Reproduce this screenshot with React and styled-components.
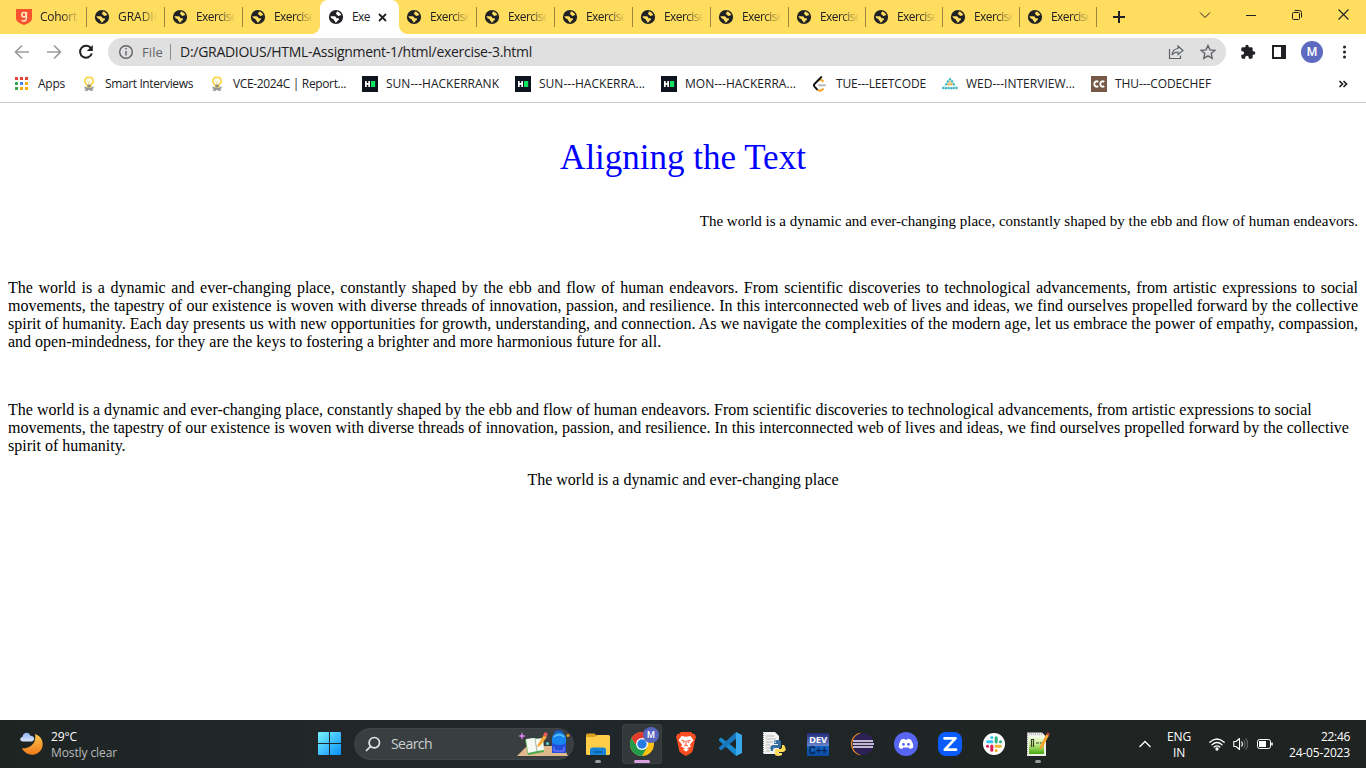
import React, { useLayoutEffect, useRef, useState } from "react";
import styled, { createGlobalStyle, css } from "styled-components";

const GlobalStyle = createGlobalStyle`
  * { box-sizing: border-box; }
  html, body { margin: 0; padding: 0; overflow: hidden; background: #fff; }
  svg { display: block; flex: none; }
`;

const ui = `"Open Sans", "Noto Sans", sans-serif`;

/* Text */
const Label = styled.span`
  display: block;
  flex: none;
  width: ${(p) => p.$width}px;
  font-family: ${ui};
  font-size: ${(p) => p.$size || 12}px;
  line-height: 16px;
  color: ${(p) => p.$color || "#202124"};
  white-space: nowrap;
`;

/* Tracks its text so that it fills the given width exactly. */
function Fit({ width, size, color, children }) {
  const ref = useRef(null);
  const [spacing, setSpacing] = useState(0);
  useLayoutEffect(() => {
    const natural = ref.current.getBoundingClientRect().width;
    setSpacing((width - natural) / children.length);
  }, [width, children]);
  return (
    <Label $width={width} $size={size} $color={color}>
      <span ref={ref} style={{ letterSpacing: spacing }}>{children}</span>
    </Label>
  );
}

/* Frame */
const Screen = styled.div`
  width: 1366px;
  height: 768px;
  display: flex;
  flex-direction: column;
  background: #fff;
  overflow: hidden;
`;

const TabStrip = styled.div`
  height: 34px;
  flex: none;
  display: flex;
  align-items: stretch;
  padding-left: 8px;
  background: #ffdd5e;
`;

const Tab = styled.div`
  position: relative;
  display: flex;
  flex: none;
  align-items: center;
  gap: 8px;
  width: ${(p) => p.$width}px;
  padding-left: 8px;
  ${(p) => p.$line && css`
    &::after {
      content: "";
      position: absolute;
      right: -1px;
      top: 7px;
      width: 1px;
      height: 20px;
      background: #9b8742;
    }
  `}
  ${(p) => p.$active && css`
    width: 79px;
    margin-right: -1px;
    background: #fff;
    border-radius: 8px 8px 0 0;
    &::before, &::after {
      content: "";
      position: absolute;
      bottom: 0;
      width: 8px;
      height: 8px;
    }
    &::before {
      left: -8px;
      background: radial-gradient(circle at 0 0, transparent 7.5px, #fff 8px);
    }
    &::after {
      right: -8px;
      background: radial-gradient(circle at 100% 0, transparent 7.5px, #fff 8px);
    }
  `}
`;

const TabTitle = styled.div`
  flex: none;
  ${(p) => p.$fade && css`mask-image: linear-gradient(90deg, #000 22px, transparent 39px);`}
`;

const NewTab = styled.div`
  display: flex;
  align-items: center;
  padding-left: 17px;
`;

const WindowButtons = styled.div`
  margin-left: auto;
  display: flex;
  height: 29px;
  align-items: center;
`;

const WindowButton = styled.div`
  width: 46px;
  display: flex;
  justify-content: center;
`;

const Toolbar = styled.div`
  height: 36px;
  flex: none;
  display: flex;
  align-items: center;
  padding-left: 14px;
`;

const NavButtons = styled.div`
  width: 94px;
  flex: none;
  display: flex;
  gap: 16px;
`;

const AddressBar = styled.div`
  width: 1118px;
  height: 28px;
  flex: none;
  border-radius: 14px;
  background: #e0e0e0;
  display: flex;
  align-items: center;
  padding: 0 10px;
`;

const AddressScheme = styled.div`
  padding-left: 8px;
`;

const AddressDivider = styled.i`
  width: 1px;
  height: 16px;
  margin: 0 9px 0 7px;
  background: #8b8c8e;
`;

const AddressActions = styled.div`
  margin-left: auto;
  display: flex;
  gap: 16px;
`;

const ToolbarActions = styled.div`
  display: flex;
  align-items: center;
  gap: 14px;
  padding-left: 14px;
`;

const Avatar = styled.div`
  width: 22px;
  height: 22px;
  border-radius: 50%;
  background: #5c6bc0;
  color: #fff;
  font: 500 12px/22px Roboto, sans-serif;
  text-align: center;
`;

const BookmarkBar = styled.div`
  height: 33px;
  flex: none;
  display: flex;
  align-items: center;
  gap: 16px;
  padding: 0 18px 4px 14px;
  border-bottom: 1px solid #c8c8c8;
`;

const Bookmark = styled.div`
  display: flex;
  align-items: center;
  gap: 8px;
`;

const Overflow = styled.div`
  margin-left: auto;
`;

/* Document */
const Page = styled.main`
  flex: 1;
  min-height: 0;
  padding: 35px 8px 0;
  font-family: "Liberation Serif", "Times New Roman", serif;
  font-size: 16px;
  line-height: 18px;
  color: #000;
`;

const Heading = styled.h1`
  margin: 0;
  font-size: 35px;
  line-height: 40px;
  font-weight: 400;
  text-align: center;
  color: #00f;
`;

const Paragraph = styled.p`
  margin: ${(p) => p.$top}px 0 0;
  text-align: ${(p) => p.$align || "left"};
  font-size: ${(p) => p.$size || 16}px;
`;

/* Taskbar */
const Taskbar = styled.footer`
  height: 48px;
  flex: none;
  display: flex;
  align-items: center;
  background: linear-gradient(90deg, #1e2422, #22282a 28%, #20272a 45%, #1f2523 75%, #1f2322);
`;

const Weather = styled.div`
  width: 318px;
  display: flex;
  gap: 7px;
  padding-left: 19px;
  align-items: center;
`;

const SearchBox = styled.div`
  width: 220px;
  height: 32px;
  margin-left: 12px;
  border-radius: 16px;
  border: 1px solid #404648;
  background: #393f40;
  display: flex;
  align-items: center;
  gap: 10px;
  padding-left: 10px;
`;

const SearchArt = styled.div`
  margin-left: auto;
  padding-right: 1px;
`;

const Apps = styled.div`
  display: flex;
  gap: 4px;
  margin-left: 4px;
`;

const AppTile = styled.div`
  position: relative;
  width: 40px;
  height: 40px;
  border-radius: 4px;
  display: flex;
  align-items: center;
  justify-content: center;
  ${(p) => p.$active && css`background: #33393b; box-shadow: inset 0 0 0 1px #3b4143;`}
`;

const Indicator = styled.i`
  position: absolute;
  left: 50%;
  bottom: 1px;
  width: ${(p) => (p.$active ? 16 : 6)}px;
  height: 3px;
  transform: translateX(-50%);
  border-radius: 2px;
  background: ${(p) => (p.$active ? "#d9a0df" : "#979b9b")};
`;

const ProfileBadge = styled.div`
  position: absolute;
  left: 21px;
  top: 3px;
  width: 16px;
  height: 16px;
  border-radius: 50%;
  background: #5865bd;
  color: #fff;
  font: 500 9px/16px Roboto, sans-serif;
  text-align: center;
`;

const Tray = styled.div`
  margin-left: auto;
  display: flex;
  align-items: center;
  padding-right: 16px;
`;

const TextStack = styled.div`
  display: flex;
  flex-direction: column;
  align-items: ${(p) => p.$align || "center"};
  margin: ${(p) => p.$margin || 0};
  padding-top: ${(p) => p.$drop || 0}px;
`;

const TrayIcons = styled.div`
  display: flex;
  gap: 8px;
`;

/* Icons */
const GlobeTint = styled.span`color: ${(p) => (p.$active ? "#fff" : "#ffdd5e")};`;

const Globe = () => (
  <svg width="16" height="16" viewBox="0 0 16 16">
    <circle cx="8" cy="8" r="7.1" fill="#202124" />
    <path d="M8.700 2.400c2.200.2 4 1.600 4.600 3.600-.8.3-1.400.1-2 .7-.7.600-1.700.2-1.900-.6-.3-.7-1.200-.5-1.400-1.300-.1-.9.800-.9.700-2.400zM2.400 7.300h3.700c1.600 0 2.300.8 2.200 1.900h1.800c1 .1 1.200 1 .6 1.700-.9.2-1.100.6-1.300 1.300-.5.8-1.300 1.300-2.300 1.300v-1.400c-1-.3-1.400-1-1.400-1.900-1.500-.2-3-1.300-3.300-2.900z" fill="currentColor" />
  </svg>
);

const Gradious = () => (
  <svg width="16" height="16" viewBox="0 0 16 16">
    <path d="M0 0h16v9.500c0 3-3.500 4.800-8 6.500-4.500-1.700-8-3.500-8-6.500z" fill="#f9522e" />
    <circle cx="8" cy="5.800" r="2.200" fill="none" stroke="#ffe9c8" strokeWidth="1.500" />
    <path d="M10.400 3v6.600c0 2.800-3.700 3-4.900 1.500" fill="none" stroke="#ffe9c8" strokeWidth="1.500" />
  </svg>
);

const AppsGrid = () => (
  <svg width="16" height="16" viewBox="0 0 16 16">
    {["#ea4335", "#ea4335", "#ea4335", "#34a853", "#4285f4", "#f9ab00", "#34a853", "#f9ab00", "#f9ab00"].map((c, i) => (
      <rect key={i} x={1 + (i % 3) * 5} y={1 + Math.floor(i / 3) * 5} width="3" height="3" fill={c} />
    ))}
  </svg>
);

const Bulb = () => (
  <svg width="16" height="16" viewBox="0 0 16 16">
    <path d="M8 1.300c-5 0-5.200 5.200-2.300 7.200L6.500 11h3l.8-2.500C13.200 6.500 13 1.300 8 1.300z" fill="#fffdf0" stroke="#f7d43c" strokeWidth="1.500" />
    <path d="M6.800 5.500L8 7.500l1.200-2" stroke="#e6cf79" strokeWidth=".8" fill="none" />
    <path d="M6.400 8.500h3.200v2.500H6.400z" fill="#8d8a7c" />
    <path d="M3.500 10.300l2 1.200h5l2-1.200v2l-1.400 1 1.600 1.500H9L8 13.200l-1 1.600H3.300l1.600-1.500-1.400-1z" fill="#929297" />
  </svg>
);

const HackerRank = () => (
  <svg width="16" height="16" viewBox="0 0 16 16">
    <path d="M0 0h16v16H0z" fill="#0e141e" />
    <path d="M3 5h1.700v2h1.600V5H8v6H6.300V8.700H4.700V11H3z" fill="#fff" />
    <path d="M9 5h4.200v6H9z" fill="#0be25f" />
  </svg>
);

const LeetCode = () => (
  <svg width="16" height="16" viewBox="0 0 16 16" fill="none" strokeWidth="1.900">
    <path d="M5.800 5l1.600-1.100c1-.5 1.900-.2 2.500.4l1.500 1.400M5.500 13.600c1.200 1.500 3.200 1.600 4.300.4l1.600-1.500" stroke="#f5a31a" />
    <path d="M9.800.5L2.500 8c-.8.900-.7 1.800 0 2.600l3 3.200" stroke="#111" />
    <path d="M6.300 9.300h7.500" stroke="#b3b3b3" />
  </svg>
);

const InterviewBit = () => (
  <svg width="16" height="16" viewBox="0 0 16 16">
    <path d="M8 3L1 12M8 3l7 9M4 8.500h8M1 12h14" stroke="#8fd0d6" strokeWidth=".8" />
    {[[8, 3.2], [5.900, 5.500], [10.100, 5.500], [4.300, 8.200], [11.700, 8.200], [1.300, 12], [4, 12.300], [6.700, 12], [9.400, 12.300], [12, 12], [14.700, 12]].map(([x, y], i) => (
      <circle key={i} cx={x} cy={y} r="1.200" fill="#41b9c6" />
    ))}
    <circle cx="6.700" cy="8.300" r="1.200" fill="#f1b04b" />
    <circle cx="9.300" cy="8.300" r="1.200" fill="#f1b04b" />
    <circle cx="8" cy="5.800" r=".9" fill="#f1b04b" />
  </svg>
);

const CodeChef = () => (
  <svg width="16" height="16" viewBox="0 0 16 16">
    <path d="M0 0h16v16H0z" fill="#755846" />
    <path d="M7.300 5.900C5.200 4.600 3.300 5.700 3.300 8s1.900 3.400 4 2.100M13.300 5.900c-2.100-1.300-4-.2-4 2.100s1.900 3.400 4 2.100" fill="none" stroke="#fff" strokeWidth="1.900" />
  </svg>
);

const Stroke = ({ w = 16, h = 16, d, color = "#202124", sw = 1.5, children }) => (
  <svg width={w} height={h} viewBox={`0 0 ${w} ${h}`} fill="none" stroke={color} strokeWidth={sw}>
    <path d={d} />
    {children}
  </svg>
);

const Reload = () => (
  <Stroke sw={2} d="M13 4.200A6 6 0 1 0 13.800 9.500">
    <path d="M14.800 1v6H8.800z" fill="#202124" stroke="none" />
  </Stroke>
);

const Puzzle = () => (
  <svg width="16" height="16" viewBox="0 0 24 24" fill="#202124">
    <path d="M20.500 11H19V7c0-1.100-.9-2-2-2h-4V3.500a2.500 2.500 0 0 0-5 0V5H4c-1.100 0-2 .9-2 2v3.800h1.500a2.700 2.700 0 0 1 0 5.400H2V20c0 1.100.9 2 2 2h3.800v-1.500a2.700 2.700 0 0 1 5.400 0V22H17c1.100 0 2-.9 2-2v-4h1.500a2.500 2.500 0 0 0 0-5z" />
  </svg>
);

const PartlyMoon = () => (
  <svg width="25" height="24" viewBox="0 0 25 24">
    <defs>
      <linearGradient id="moon" x2="0" y2="1"><stop stopColor="#fbc54d" /><stop offset="1" stopColor="#f17b19" /></linearGradient>
      <linearGradient id="cloud" x2="0" y2="1"><stop stopColor="#8db5f5" /><stop offset="1" stopColor="#dce6fb" /></linearGradient>
    </defs>
    <path d="M16 2c9.500 3 10 15 2.500 19.300-5.500 3.200-12.500 1-15.500-5C10 16.900 18 12 16 2z" fill="url(#moon)" />
    <path d="M4 9.500C.5 9.500.2 5.500 3.600 4.800 4-.2 10.500-.3 11.200 3.700c5-.3 5.300 5.800 1 5.800z" fill="url(#cloud)" />
  </svg>
);

const WindowsLogo = () => (
  <svg width="24" height="24" viewBox="0 0 24 24">
    <defs><linearGradient id="win" x2="1" y2="1"><stop stopColor="#79f2ff" /><stop offset="1" stopColor="#0890fb" /></linearGradient></defs>
    <path d="M0 1q0-1 1-1h10v11H0zM12 0h10q1 0 1 1v10H12zM0 12h11v11H1q-1 0-1-1zM12 12h11v10q0 1-1 1H12z" fill="url(#win)" />
  </svg>
);

const SchoolArt = () => (
  <svg width="56" height="28" viewBox="0 0 56 28">
    <path d="M1 26L11 16h36l5 10z" fill="#dfb88b" />
    <path d="M6 2l1 3 3 1-3 1-1 3-1-3-3-1 3-1z" fill="#dd7df4" />
    <path d="M9 10l9-2 9 1 1 13-16 3z" fill="#4eaa52" />
    <path d="M10 9l8-1 2 1 7-1 1 12-7 1-9 2z" fill="#f7faf2" />
    <path d="M19 9l2 12" stroke="#a6b2a9" />
    <path d="M22 14l6-9 3 2-7 9-3 1z" fill="#f5ad38" />
    <path d="M27 5l2-3 3 2-2 3z" fill="#ed5b5b" />
    <circle cx="31.500" cy="13.500" r="1.500" fill="#55d9d0" />
    <path d="M39 3q0-2 3.500-2T46 3" stroke="#1a56b6" strokeWidth="2" fill="none" />
    <path d="M36 9c0-9 14-9 14 0v14H36z" fill="#1685ee" />
    <path d="M38 7c2-3 8-3 10 0" stroke="#62c8ff" strokeWidth="1.500" fill="none" />
    <path d="M36 13q7 4 14 0v10H36z" fill="#2450dc" />
    <path d="M38 17v4h10v-4" stroke="#8d7cfb" fill="none" />
    <circle cx="52" cy="5.500" r="1.500" fill="#e79a18" />
  </svg>
);

const Folder = () => (
  <svg width="24" height="24" viewBox="0 0 24 24">
    <path d="M0 3q0-1.500 1.500-1.500h7L11 4v5H0z" fill="#dca018" />
    <path d="M0 5h9l2-2h11.500Q24 3 24 4.500v17q0 1.500-1.500 1.500h-21Q0 23 0 21.500z" fill="#ffce48" />
    <path d="M4 23v-5q0-2.500 2.500-2.500h11Q20 15.500 20 18v5z" fill="#1683d5" />
    <path d="M7.500 20h9" stroke="#0a5da8" strokeWidth="1.500" />
  </svg>
);

const Chrome = () => (
  <svg width="24" height="24" viewBox="0 0 24 24">
    <circle cx="12" cy="12" r="12" fill="#fbc116" />
    <path d="M1.600 6A12 12 0 0 1 22.400 6H12v6H5z" fill="#e33b2e" />
    <path d="M1.600 6A12 12 0 0 0 12 24l5.200-9L12 12H5z" fill="#229b4c" />
    <circle cx="12" cy="12" r="6" fill="#fff" />
    <circle cx="12" cy="12" r="4.700" fill="#287be6" />
  </svg>
);

const Brave = () => (
  <svg width="20" height="24" viewBox="0 0 20 24">
    <path d="M5 0h10l2 2 1.500-.2L20 5l-1 3-2.300 11Q16 21 10 24q-6-3-6.700-5L1 8 0 5l1.500-3.200L3 2z" fill="#fb4d22" />
    <path d="M5.500 4l4.500.8 4.500-.8 3 4.300-3.500 4.200.8 2.300-4.800 2-4.800-2 .8-2.300L2.500 8.300z" fill="#fff" />
    <path d="M5.500 8.300l3 .8-1.500 1.800M14.500 8.300l-3 .8 1.500 1.800M10 8.500v4.500l-2 1M10 13l2 1" stroke="#fb4d22" fill="none" strokeWidth="1" />
    <path d="M7 17.300l3-1.300 3 1.300-3 2.500z" fill="#fff" />
  </svg>
);

const VSCode = () => (
  <svg width="24" height="24" viewBox="0 0 24 24">
    <path d="M1 7l2-1.500L18 17v7L1 8.500z" fill="#168bd0" />
    <path d="M1 17l2 1.500L18 7V0L1 15.500z" fill="#1b78bd" />
    <path d="M18 0l6 3v18l-6 3z" fill="#38a9ed" />
  </svg>
);

const PythonFile = () => (
  <svg width="24" height="24" viewBox="0 0 24 24">
    <path d="M1 0h12l4 4v18H1z" fill="#f1f1f1" />
    <path d="M4 4h8M4 7h10M4 10h7M4 13h4M4 16h4M4 19h4" stroke="#b9b9b9" />
    <path d="M1.500 1v21" stroke="#777" strokeDasharray="1 1" />
    <path d="M12 9q4-2 7 0v5q0 2-2 2h-4q-2 0-2 2v1H9q-2-6 2-6h5v-1h-4z" fill="#346f9f" />
    <path d="M20 13h2q4 6-1 7h-5v1h4v2q-4 2-7 0v-4q0-2 2-2h3q2 0 2-2z" fill="#ffda55" />
    <circle cx="13.300" cy="10.300" r=".8" fill="#fff" />
    <circle cx="18" cy="22" r=".7" fill="#fff" />
  </svg>
);

const DevTile = styled.div`
  width: 22px;
  height: 23px;
  background: linear-gradient(#242978, #6682cb 55%, #1465c4 56%, #0b4aa0);
  color: #fff;
  font: 700 9.5px/13px "Open Sans", sans-serif;
  letter-spacing: -0.2px;
  text-align: center;
`;

const DevPlus = styled.div`
  color: #07234f;
  font: 700 10px/9px "Liberation Sans", sans-serif;
`;

const Eclipse = () => (
  <svg width="24" height="24" viewBox="0 0 24 24">
    <path d="M11 .5A11.600 11.600 0 0 0 11 23.500 14 14 0 0 1 11 .5z" fill="#f7941e" />
    <circle cx="13" cy="12" r="10.800" fill="#2c2255" />
    <path d="M3 9h20M3 12h21M3 15h20" stroke="#f1f0f6" strokeWidth="1.500" />
  </svg>
);

const Discord = () => (
  <svg width="24" height="24" viewBox="0 0 24 24">
    <circle cx="12" cy="12" r="12" fill="#5865f2" />
    <path d="M7 7.700q2-1 3.300-1l.6 1h2.200l.6-1q1.300 0 3.300 1 2.500 3.700 2.200 7.800-1.700 1.400-3.300 1.500l-1-1.500H9.100l-1 1.500q-1.600-.1-3.300-1.500Q4.500 11.400 7 7.700z" fill="#fff" />
    <ellipse cx="9.500" cy="12.300" rx="1.300" ry="1.500" fill="#5865f2" />
    <ellipse cx="14.500" cy="12.300" rx="1.300" ry="1.500" fill="#5865f2" />
  </svg>
);

const Zoom = () => (
  <svg width="24" height="24" viewBox="0 0 24 24">
    <rect width="24" height="24" rx="8" fill="#0b5cff" />
    <path d="M6.500 6.300h11L6.800 17.700H18" fill="none" stroke="#fff" strokeWidth="2.700" strokeLinejoin="round" strokeLinecap="round" />
  </svg>
);

const Slack = () => (
  <svg width="22" height="22" viewBox="0 0 22 22">
    <circle cx="11" cy="11" r="11" fill="#fff" />
    <g fill="none" strokeWidth="3.100" strokeLinecap="round">
      <path d="M4.700 8.800h4.300M8.800 4.500h.1" stroke="#36c5f0" />
      <path d="M13.200 4.700V9M17.500 8.800h.1" stroke="#2eb67d" />
      <path d="M13 13.200h4.300M13.200 17.500v.1" stroke="#ecb22e" />
      <path d="M8.800 13v4.300M4.500 13.200h.1" stroke="#e01e5a" />
    </g>
  </svg>
);

const NotepadPP = () => (
  <svg width="24" height="24" viewBox="0 0 24 24">
    <defs><linearGradient id="npp" x2="0" y2="1"><stop stopColor="#fbfff2" /><stop offset=".45" stopColor="#c5ed87" /><stop offset="1" stopColor="#45a80e" /></linearGradient></defs>
    <path d="M1 .5h15l4 4V24H1z" fill="#eeeeea" />
    <path d="M3 4h15v18H3z" fill="url(#npp)" />
    <path d="M3 2h13M1.500 1v22" stroke="#999" strokeDasharray="1 1" />
    <path d="M5.500 15V7.500h2V15M10 11h3M14 11h3" stroke="#35402e" fill="none" strokeWidth="1.200" />
    <path d="M13.500 18l.5-4 6.500-12 2.500 1.500-6.500 12z" fill="#f4a62d" />
    <path d="M20.500 2l1-2L24 1.500l-1 2z" fill="#b23d40" />
  </svg>
);

const Wifi = () => (
  <svg width="16" height="16" viewBox="0 0 16 16" fill="none" stroke="#fff" strokeWidth="1.300" strokeLinecap="round">
    <path d="M.8 6.300q7.200-6.600 14.400 0M3 8.700q5-4.400 10 0M5.200 11q2.800-2.300 5.600 0" />
    <circle cx="8" cy="13" r="1" fill="#fff" />
  </svg>
);

const Volume = () => (
  <svg width="16" height="16" viewBox="0 0 16 16" fill="none" stroke="#fff" strokeWidth="1.100" strokeLinejoin="round">
    <path d="M.8 5.500H3L6.500 2.500v11L3 10.500H.8zM8.500 5.500q1.800 2.500 0 5" />
    <path d="M10.500 3.800q3 4.200 0 8.400M12.700 2.300q4 5.700 0 11.400" stroke="#666b6b" />
  </svg>
);

const Battery = () => (
  <svg width="16" height="16" viewBox="0 0 16 16" fill="none" stroke="#fff">
    <rect x=".5" y="3.500" width="13" height="9" rx="2" />
    <path d="M2 5h7v6H2z" fill="#fff" stroke="none" />
    <path d="M15 6.500v3" strokeWidth="1.500" />
  </svg>
);

const tabs = [
  { title: "Cohort", text: 37, width: 78, icon: <Gradious /> },
  { title: "GRADIO", text: 45, width: 78 },
  { title: "Exercise", text: 41, width: 78 },
  { title: "Exercise", text: 41, width: 78, last: true },
  { title: "Exe", text: 18, active: true, width: 79 },
  ...[78, 78, 78, 78, 78, 77, 77, 77, 77].map((width) => ({ title: "Exercise", text: 41, width })),
];

const bookmarks = [
  ["Apps", 27, AppsGrid],
  ["Smart Interviews", 88, Bulb],
  ["VCE-2024C | Report...", 113, Bulb],
  ["SUN---HACKERRANK", 113, HackerRank],
  ["SUN---HACKERRA...", 106, HackerRank],
  ["MON---HACKERRA...", 111, HackerRank],
  ["TUE---LEETCODE", 90, LeetCode],
  ["WED---INTERVIEW...", 109, InterviewBit],
  ["THU---CODECHEF", 96, CodeChef],
];

const apps = [
  { icon: <Folder />, open: true },
  { icon: <Chrome />, open: true, active: true },
  { icon: <Brave /> },
  { icon: <VSCode /> },
  { icon: <PythonFile /> },
  { icon: <DevTile>DEV<DevPlus>C++</DevPlus></DevTile> },
  { icon: <Eclipse /> },
  { icon: <Discord /> },
  { icon: <Zoom /> },
  { icon: <Slack /> },
  { icon: <NotepadPP />, open: true },
];

export default function App() {
  return (
    <Screen>
      <GlobalStyle />
      <TabStrip>
        {tabs.map((t, i) => (
          <Tab key={i} $width={t.width} $active={t.active} $line={!t.active && !t.last}>
            {t.icon || <GlobeTint $active={t.active}><Globe /></GlobeTint>}
            <TabTitle $fade={!t.active}>
              <Fit width={t.text}>{t.title}</Fit>
            </TabTitle>
            {t.active && <Stroke w={9} h={9} sw={1.8} d="M1 1l7 7M8 1L1 8" />}
          </Tab>
        ))}
        <NewTab><Stroke w={12} h={12} sw={2} d="M6 0v12M0 6h12" /></NewTab>
        <WindowButtons>
          <WindowButton><Stroke w={12} h={8} sw={1} d="M1 1.500l5 5 5-5" /></WindowButton>
          <WindowButton><Stroke w={10} h={10} sw={1} d="M0 5.500h10" /></WindowButton>
          <WindowButton>
            <Stroke w={10} h={10} sw={1} d="M2.500 .5h5q2 0 2 2v5">
              <rect x=".5" y="2.500" width="7" height="7" rx="1" />
            </Stroke>
          </WindowButton>
          <WindowButton><Stroke w={11} h={11} sw={1.1} d="M.5 .5l10 10M10.500 .5l-10 10" /></WindowButton>
        </WindowButtons>
      </TabStrip>

      <Toolbar>
        <NavButtons>
          <Stroke color="#9b9c9e" sw={1.7} d="M15 8H2M8 1.500L1.500 8 8 14.500" />
          <Stroke color="#9b9c9e" sw={1.7} d="M1 8h13M8 1.500L14.500 8 8 14.500" />
          <Reload />
        </NavButtons>
        <AddressBar>
          <Stroke color="#5f6368" sw={1.4} d="M8 7v4.500M8 4v1.600"><circle cx="8" cy="8" r="6.300" /></Stroke>
          <AddressScheme><Fit width={21} size={13} color="#5f6368">File</Fit></AddressScheme>
          <AddressDivider />
          <Fit width={352} size={14}>D:/GRADIOUS/HTML-Assignment-1/html/exercise-3.html</Fit>
          <AddressActions>
            <Stroke color="#5f6368" sw={1.2} d="M1.500 5v9.500h11v-3M10 2l5 4.500-5 4V8Q6 8 4 11q.5-6 6-6.500z" />
            <Stroke color="#5f6368" sw={1.4} d="M8 1.500l2 4.400 4.800.5-3.600 3.200 1 4.700L8 11.900l-4.200 2.400 1-4.700L1.200 6.400 6 5.900z" />
          </AddressActions>
        </AddressBar>
        <ToolbarActions>
          <Puzzle />
          <svg width="17" height="16" viewBox="0 0 17 16">
            <path d="M2 1h14v14H2z" fill="#202124" /><path d="M4 3h7v10H4z" fill="#fff" />
          </svg>
          <Avatar>M</Avatar>
          <svg width="16" height="16" viewBox="0 0 16 16" fill="#202124">
            <circle cx="7.500" cy="3" r="1.500" /><circle cx="7.500" cy="8" r="1.500" /><circle cx="7.500" cy="13" r="1.500" />
          </svg>
        </ToolbarActions>
      </Toolbar>

      <BookmarkBar>
        {bookmarks.map(([title, width, Icon], i) => (
          <Bookmark key={i}><Icon /><Fit width={width}>{title}</Fit></Bookmark>
        ))}
        <Overflow><Stroke w={10} h={8} sw={1.7} d="M1.500 1l3 3-3 3M5.500 1l3 3-3 3" /></Overflow>
      </BookmarkBar>

      <Page>
        <Heading>Aligning the Text</Heading>
        <Paragraph $top={34} $align="right" $size={15}>
          The world is a dynamic and ever-changing place, constantly shaped by the ebb and flow of human endeavors.
        </Paragraph>
        <Paragraph $top={49} $align="justify">
          The world is a dynamic and ever-changing place, constantly shaped by the ebb and flow of human endeavors. From scientific discoveries to technological advancements, from artistic expressions to social movements, the tapestry of our existence is woven with diverse threads of innovation, passion, and resilience. In this interconnected web of lives and ideas, we find ourselves propelled forward by the collective spirit of humanity. Each day presents us with new opportunities for growth, understanding, and connection. As we navigate the complexities of the modern age, let us embrace the power of empathy, compassion, and open-mindedness, for they are the keys to fostering a brighter and more harmonious future for all.
        </Paragraph>
        <Paragraph $top={50}>
          The world is a dynamic and ever-changing place, constantly shaped by the ebb and flow of human endeavors. From scientific discoveries to technological advancements, from artistic expressions to social movements, the tapestry of our existence is woven with diverse threads of innovation, passion, and resilience. In this interconnected web of lives and ideas, we find ourselves propelled forward by the collective spirit of humanity.
        </Paragraph>
        <Paragraph $top={16} $align="center">The world is a dynamic and ever-changing place</Paragraph>
      </Page>

      <Taskbar>
        <Weather>
          <PartlyMoon />
          <TextStack $align="flex-start" $drop={2}>
            <Fit width={26} color="#fff">29°C</Fit>
            <Fit width={66} color="#b9bcbb">Mostly clear</Fit>
          </TextStack>
        </Weather>
        <WindowsLogo />
        <SearchBox>
          <Stroke color="#e4e6e6" sw={1.7} d="M5.600 10.400L1 15"><circle cx="9.300" cy="6.700" r="5.200" /></Stroke>
          <Fit width={41} size={14} color="#cdd0d0">Search</Fit>
          <SearchArt><SchoolArt /></SearchArt>
        </SearchBox>
        <Apps>
          {apps.map((a, i) => (
            <AppTile key={i} $active={a.active}>
              {a.icon}
              {a.active && <ProfileBadge>M</ProfileBadge>}
              {a.open && <Indicator $active={a.active} />}
            </AppTile>
          ))}
        </Apps>
        <Tray>
          <Stroke w={14} h={8} color="#fff" sw={1.3} d="M1.500 7L7 1.500 12.500 7" />
          <TextStack $margin="0 18px 0 15px" $drop={2}>
            <Fit width={24} color="#fff">ENG</Fit>
            <Fit width={12} color="#fff">IN</Fit>
          </TextStack>
          <TrayIcons><Wifi /><Volume /><Battery /></TrayIcons>
          <TextStack $align="flex-end" $margin="0 0 0 16px" $drop={1}>
            <Fit width={29} color="#fff">22:46</Fit>
            <Fit width={61} color="#fff">24-05-2023</Fit>
          </TextStack>
        </Tray>
      </Taskbar>
    </Screen>
  );
}
